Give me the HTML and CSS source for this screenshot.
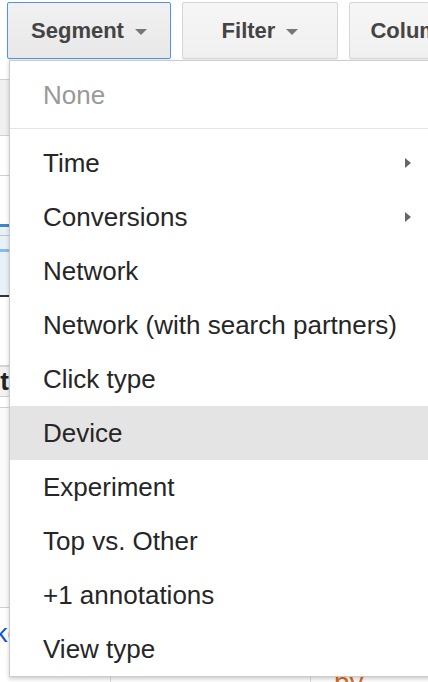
FILE: index.html
```html
<!DOCTYPE html>
<html>
<head>
<meta charset="utf-8">
<link rel="stylesheet" href="styles.css">
</head>
<body>
<div class="toolbar">
  <button class="tbtn active seg">Segment <span class="caret"></span></button>
  <button class="tbtn filt">Filter <span class="caret"></span></button>
  <button class="tbtn cols">Columns <span class="caret"></span></button>
</div>
<div class="page">
  <div class="gap21"></div>
  <div class="tabbar"></div>
  <div class="row40"></div>
  <div class="row49"></div>
  <div class="chart"><div class="cl1"></div><div class="cl2"></div><div class="cl3"></div></div>
  <div class="row70"></div>
  <div class="thead"><span class="th">Segment</span></div>
  <div class="tsub"></div>
  <div class="tbody"></div>
  <div class="trow"><span class="lnk">Make</span></div>
  <div class="tbottom"><div class="c1"></div><div class="c2"></div><div class="c3"><span class="by">by</span></div></div>
</div>
<div class="menu">
  <div class="item none">None</div>
  <div class="sep"></div>
  <div class="item">Time<span class="sub"></span></div>
  <div class="item">Conversions<span class="sub"></span></div>
  <div class="item">Network</div>
  <div class="item">Network (with search partners)</div>
  <div class="item">Click type</div>
  <div class="item hover">Device</div>
  <div class="item">Experiment</div>
  <div class="item">Top vs. Other</div>
  <div class="item">+1 annotations</div>
  <div class="item">View type</div>
</div>
</body>
</html>
```
FILE: styles.css
```css
html, body {
  margin: 0;
  padding: 0;
  background: #fff;
  overflow: hidden;
  width: 428px;
  height: 682px;
}
body {
  font-family: "Liberation Sans", Arial, sans-serif;
  position: relative;
}
.toolbar {
  display: flex;
  gap: 11px;
  padding: 2px 0 0 7px;
  white-space: nowrap;
  height: 58px;
  box-sizing: border-box;
}
.tbtn {
  flex: none;
  height: 57px;
  border: 1px solid #d6d6d6;
  border-radius: 2px;
  background: linear-gradient(#f6f6f6, #f0f0f0);
  font-family: "Liberation Sans", Arial, sans-serif;
  font-weight: bold;
  font-size: 22px;
  color: #444;
  display: flex;
  align-items: center;
  justify-content: center;
  gap: 11px;
  padding: 0;
  box-shadow: 0 1px 0 rgba(0,0,0,0.06);
}
.seg { width: 164px; }
.filt { width: 156px; }
.cols { width: 160px; }
.tbtn.active {
  border-color: #4d90fe;
  background: linear-gradient(#f1f1f1, #e8e8e8);
}
.caret {
  width: 0;
  height: 0;
  border-left: 6px solid transparent;
  border-right: 6px solid transparent;
  border-top: 6px solid #777;
  margin-top: 3px;
}
.page {
  width: 428px;
}
.gap21 { height: 21px; }
.tabbar {
  height: 55px;
  border-top: 1px solid #d0d0d0;
  border-bottom: 1px solid #d0d0d0;
  background: linear-gradient(90deg, #f0f0f0, #f8f8f8);
}
.row40 { height: 39px; border-bottom: 1px solid #cfcfcf; }
.row49 { height: 48px; }
.chart {
  height: 71px;
  background: #e9f1f8;
  border-bottom: 2px solid #333;
  display: flex;
  flex-direction: column;
}
.cl1 { height: 3px; background: #3d85c6; }
.cl2 { height: 1px; background: #b9c4ce; margin-top: 8px; }
.cl3 { height: 3px; background: #86bde0; margin-top: 13px; }
.row70 { height: 68px; border-bottom: 2px solid #d4d4d4; }
.thead {
  height: 29px;
  background: #f2f2f2;
  display: flex;
  justify-content: flex-end;
  width: 9px;
  overflow: hidden;
  font-weight: bold;
  font-size: 26px;
  color: #222;
  line-height: 29px;
}
.th { flex: none; }
.tsub {
  height: 10px;
  border-top: 1px solid #d0d0d0;
  border-bottom: 1px solid #d0d0d0;
}
.tbody {
  height: 199px;
  background: linear-gradient(90deg, #fafafa, #f2f2f2);
  border-bottom: 1px solid #d0d0d0;
}
.trow {
  height: 59px;
  display: flex;
  justify-content: flex-end;
  width: 9px;
  overflow: hidden;
  color: #1155cc;
  font-size: 26px;
  line-height: 50px;
}
.trow .lnk { flex: none; margin-right: -13px; }
.tbottom {
  display: flex;
  height: 40px;
}
.c1 { width: 110px; border-right: 1px solid #ddd; }
.c2 { width: 199px; border-right: 1px solid #ddd; }
.c3 { flex: 1; padding-left: 23px; }
.by { color: #dd6b1f; font-size: 28px; line-height: 20px; display: block; margin-top: 6px; }

.menu {
  position: absolute;
  left: 9px;
  top: 60px;
  width: 440px;
  background: #fff;
  border: 1px solid rgba(0,0,0,0.2);
  box-shadow: 0 2px 4px rgba(0,0,0,0.2);
  padding: 7px 0 0;
  box-sizing: border-box;
}
.item {
  height: 54px;
  display: flex;
  align-items: center;
  justify-content: space-between;
  padding: 0 37px 0 33px;
  font-size: 26px;
  color: #262626;
  white-space: nowrap;
}
.item.none { color: #999; }
.item.hover { background: #e4e4e4; }
.sep {
  height: 1px;
  background: #e5e5e5;
  margin: 6px 0 7px;
}
.sub {
  width: 0;
  height: 0;
  border-top: 5px solid transparent;
  border-bottom: 5px solid transparent;
  border-left: 6px solid #666;
}
```
